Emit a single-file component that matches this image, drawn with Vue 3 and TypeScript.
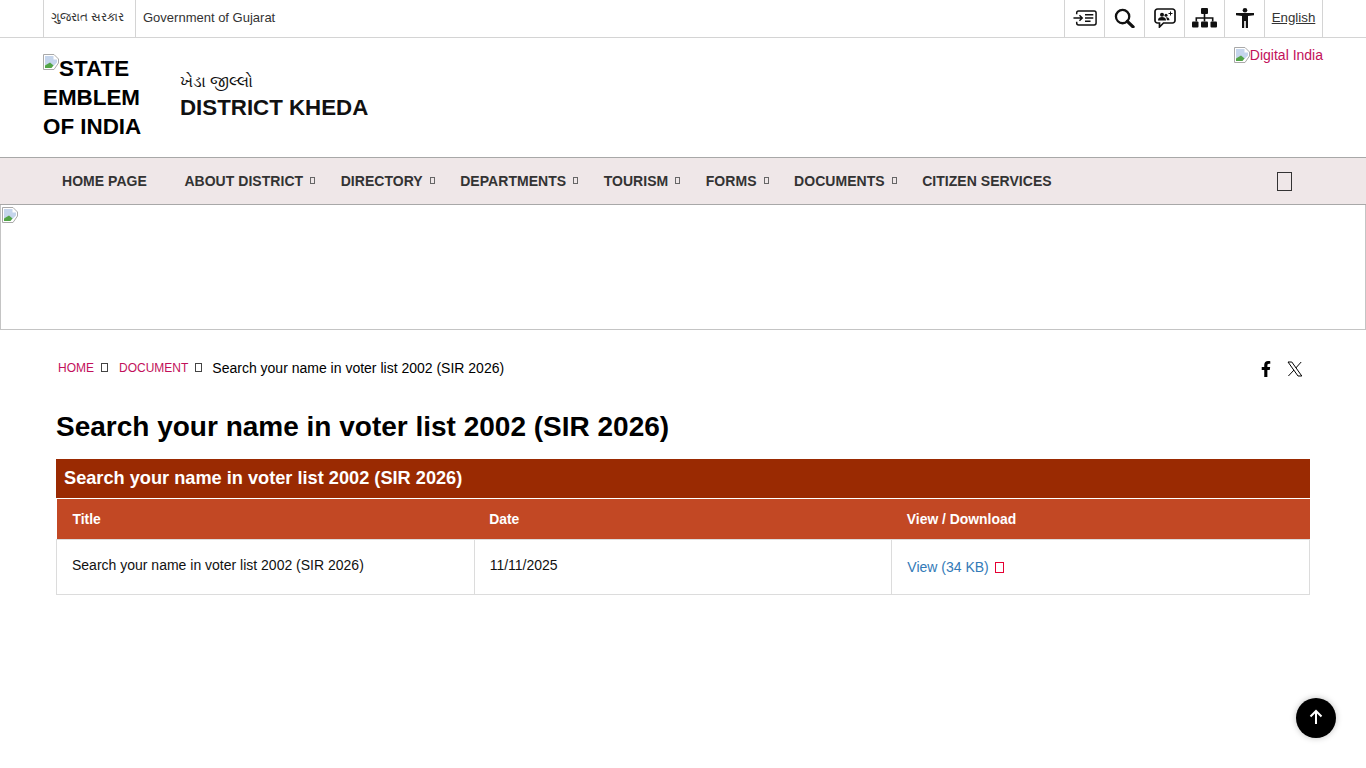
<script setup lang="ts">
interface NavItem {
  label: string;
  hasMenu: boolean;
}

const navItems: NavItem[] = [
  { label: 'HOME PAGE', hasMenu: false },
  { label: 'ABOUT DISTRICT', hasMenu: true },
  { label: 'DIRECTORY', hasMenu: true },
  { label: 'DEPARTMENTS', hasMenu: true },
  { label: 'TOURISM', hasMenu: true },
  { label: 'FORMS', hasMenu: true },
  { label: 'DOCUMENTS', hasMenu: true },
  { label: 'CITIZEN SERVICES', hasMenu: false },
]

const pageTitle = 'Search your name in voter list 2002 (SIR 2026)'
</script>

<template>
  <div class="page">
    <!-- Top bar -->
    <div class="top-bar">
      <div class="top-inner">
        <div class="gov-links">
          <a class="gov-link gu">ગુજરાત સરકાર</a>
          <a class="gov-link">Government of Gujarat</a>
        </div>
        <div class="tools">
          <a class="tool">
            <svg width="24" height="16" viewBox="0 0 26 17" fill="none" stroke="#111" stroke-width="1.6">
              <path d="M4 4.500V3A2 2 0 0 1 6 1h17a2 2 0 0 1 2 2v11a2 2 0 0 1-2 2H6a2 2 0 0 1-2-2V12.500" />
              <path d="M0.500 8.500h9M7 5.500l3 3-3 3" />
              <path d="M13 5h9M13 8.500h9M13 12h6" />
            </svg>
          </a>
          <a class="tool">
            <svg width="21" height="20" viewBox="0 0 22 21" fill="none" stroke="#111">
              <circle cx="9" cy="9" r="7" stroke-width="2.400" />
              <path d="M14 14l6 5.800" stroke-width="3.400" stroke-linecap="round" />
            </svg>
          </a>
          <a class="tool">
            <svg width="22" height="20" viewBox="0 0 22 20">
              <path d="M3.500 1h15A2.500 2.500 0 0 1 21 3.500v9a2.500 2.500 0 0 1-2.500 2.500H9.500L5.500 19v-4h-2A2.500 2.500 0 0 1 1 12.500v-9A2.500 2.500 0 0 1 3.500 1z" fill="none" stroke="#111" stroke-width="1.700" />
              <circle cx="8" cy="6.800" r="2" fill="#111" />
              <path d="M4 12.500c0-2.400 1.800-3.400 4-3.400s4 1 4 3.400z" fill="#111" />
              <circle cx="12" cy="7.200" r="1.500" fill="#111" />
              <path d="M12.500 9.200c1.800 0 3 .9 3 3h-2.600c0-1.200-.4-2-1.100-2.600z" fill="#111" />
              <path d="M16.500 3.500v4M14.500 5.500h4" stroke="#111" stroke-width="1" />
            </svg>
          </a>
          <a class="tool">
            <svg width="25" height="20" viewBox="0 0 25 20" fill="#111">
              <rect x="9" y="0" width="7" height="6" rx="1" />
              <rect x="0" y="13.500" width="6.500" height="6" rx="1" />
              <rect x="9" y="13.500" width="7" height="6" rx="1" />
              <rect x="18.500" y="13.500" width="6.500" height="6" rx="1" />
              <path d="M11.700 6h1.600v3.200h8.200v4.300h-1.600v-2.700h-6.600v2.700h-1.600v-2.700H5.100v2.700H3.500V9.200h8.200z" />
            </svg>
          </a>
          <a class="tool">
            <svg width="20" height="20" viewBox="0 0 20 20" fill="#111">
              <circle cx="10" cy="2.300" r="2.300" />
              <path d="M1 5h18v2.200l-6 .8v12h-2.200v-7h-1.600v7H7V8l-6-.8z" />
            </svg>
          </a>
          <a class="tool lang">English</a>
        </div>
      </div>
    </div>

    <!-- Header -->
    <header class="site-header">
      <div class="brand">
        <div class="emblem">
          <svg class="broken" width="16" height="16" viewBox="0 0 16 16">
            <path d="M0.500 0.500h10.500L15.500 5v4L11 15.500H0.500z" fill="#fff" stroke="#a9a9a9" />
            <path d="M2 2h8.500v3.500H14v3L10.500 12 2 11z" fill="#c5d5ec" />
            <path d="M2 14V11.500l5-3 3.500 3-2 2.500z" fill="#52a447" />
          </svg>STATE EMBLEM OF INDIA
        </div>
        <div class="brand-text">
          <div class="brand-gu">ખેડા જીલ્લો</div>
          <div class="brand-en">DISTRICT KHEDA</div>
        </div>
      </div>
      <a class="digital">
        <svg class="broken" width="16" height="16" viewBox="0 0 16 16">
          <path d="M0.500 0.500h10.500L15.500 5v4L11 15.500H0.500z" fill="#fff" stroke="#a9a9a9" />
          <path d="M2 2h8.500v3.500H14v3L10.500 12 2 11z" fill="#c5d5ec" />
          <path d="M2 14V11.500l5-3 3.500 3-2 2.500z" fill="#52a447" />
        </svg>Digital India
      </a>
    </header>

    <!-- Nav -->
    <nav class="main-nav">
      <ul class="nav-list">
        <li v-for="item in navItems" :key="item.label" class="nav-item" :class="{ 'has-menu': item.hasMenu }">
          <span>{{ item.label }}</span>
          <i v-if="item.hasMenu" class="caret"></i>
        </li>
      </ul>
      <i class="nav-search"></i>
    </nav>

    <!-- Banner -->
    <div class="banner">
      <svg class="broken" width="16" height="16" viewBox="0 0 16 16">
        <path d="M0.500 0.500h10.500L15.500 5v4L11 15.500H0.500z" fill="#fff" stroke="#a9a9a9" />
        <path d="M2 2h8.500v3.500H14v3L10.500 12 2 11z" fill="#c5d5ec" />
        <path d="M2 14V11.500l5-3 3.500 3-2 2.500z" fill="#52a447" />
      </svg>
    </div>

    <!-- Content -->
    <main class="content">
      <div class="crumb-row">
        <div class="crumbs">
          <a>HOME</a>
          <i class="crumb-sep"></i>
          <a>DOCUMENT</a>
          <i class="crumb-sep last"></i>
          <span>{{ pageTitle }}</span>
        </div>
        <div class="share">
          <svg width="10" height="16" viewBox="0 0 320 512" fill="#000">
            <path d="M279 288l14-93h-89v-60c0-25 12-50 52-50h41V6S260 0 225 0c-73 0-121 44-121 125v70H23v93h81v224h100V288z" />
          </svg>
          <svg width="16" height="16" viewBox="0 0 16 16" fill="none" stroke="#000" stroke-width="1">
            <path d="M1 1h3.800l10 14h-3.800zM14.200 1L8.800 7M7 9l-5.600 6" />
          </svg>
        </div>
      </div>

      <h1 class="page-title">{{ pageTitle }}</h1>

      <h2 class="panel-title">{{ pageTitle }}</h2>
      <table class="doc-table">
        <thead>
          <tr>
            <th>Title</th>
            <th>Date</th>
            <th>View / Download</th>
          </tr>
        </thead>
        <tbody>
          <tr>
            <td>{{ pageTitle }}</td>
            <td>11/11/2025</td>
            <td class="view-cell"><a>View (34 KB)</a><i class="pdf-icon"></i></td>
          </tr>
        </tbody>
      </table>
    </main>

    <button class="to-top" aria-label="Back to top">
      <svg width="16" height="16" viewBox="0 0 16 16" fill="none" stroke="#fff" stroke-width="2">
        <path d="M8 15V2M2.500 7.500L8 2l5.500 5.500" />
      </svg>
    </button>
  </div>
</template>

<style>
html, body { background: #fff; }
</style>

<style scoped>
.page {
  position: relative;
  height: 768px;
  overflow: hidden;
  font-family: "Liberation Sans", Arial, "Noto Sans", sans-serif;
  color: #000;
  background: #fff;
}
a { text-decoration: none; }
.broken { flex: none; vertical-align: top; }

/* Top bar */
.top-bar { height: 37px; border-bottom: 1px solid #d4d4d4; }
.top-inner {
  height: 100%;
  margin: 0 43px;
  display: flex;
  justify-content: space-between;
}
.gov-links { display: flex; }
.gov-link {
  display: flex;
  align-items: center;
  padding: 0 7px 3px;
  font-size: 13px;
  color: #333;
  border-left: 1px solid #d4d4d4;
}
.gu { width: 92px; box-sizing: border-box; font-size: 12.3px; white-space: nowrap; }
.tools { display: flex; border-right: 1px solid #d4d4d4; }
.tool {
  width: 40px;
  box-sizing: border-box;
  padding-bottom: 1px;
  display: flex;
  align-items: center;
  justify-content: center;
  border-left: 1px solid #d4d4d4;
}
.lang {
  width: 58px;
  padding-bottom: 3px;
  font-size: 13.3px;
  color: #333;
  text-decoration: underline;
}

/* Header */
.site-header {
  height: 119px;
  padding: 0 43px;
  display: flex;
  justify-content: space-between;
  align-items: flex-start;
}
.brand { display: flex; align-items: center; padding-top: 16px; }
.emblem {
  width: 100px;
  margin-right: 37px;
  font-size: 22.4px;
  line-height: 29px;
  font-weight: 700;
  color: #000;
}
.brand-text { margin-top: -6px; }
.brand-gu { font-size: 16.2px; line-height: 26px; color: #111; }
.brand-en { font-size: 22.3px; line-height: 28px; font-weight: 700; color: #111; }
.digital {
  display: flex;
  margin-top: 9px;
  font-size: 14px;
  line-height: 16px;
  color: #c2105a;
}

/* Nav */
.main-nav {
  height: 46px;
  display: flex;
  align-items: center;
  justify-content: space-between;
  padding: 0 74px 0 62px;
  background: #efe7e8;
  border-top: 1px solid #a8a8a8;
  border-bottom: 1px solid #a8a8a8;
}
.nav-list { display: flex; margin: 0; padding: 0; list-style: none; }
.nav-item {
  display: flex;
  align-items: center;
  margin-right: 37.5px;
  font-size: 14px;
  font-weight: 700;
  letter-spacing: 0.04px;
  color: #333;
  white-space: nowrap;
}
.nav-item.has-menu { margin-right: 25.5px; }
.caret {
  width: 5px;
  height: 7px;
  box-sizing: border-box;
  margin: -1px 0 0 7px;
  border: 1px solid #666;
}
.nav-search {
  width: 13px;
  height: 17px;
  border: 1px solid #333;
}

/* Banner */
.banner {
  height: 125px;
  box-sizing: border-box;
  padding: 2px 0 0 1px;
  border: 1px solid #c4c4c4;
  border-top: 0;
}

/* Content */
.content { padding: 0 56px; }
.crumb-row {
  display: flex;
  justify-content: space-between;
  align-items: center;
  height: 24px;
  margin-top: 26px;
  padding: 0 2px;
}
.crumbs {
  display: flex;
  align-items: center;
  font-size: 14px;
  color: #000;
}
.crumbs a { font-size: 12px; color: #c2105a; }
.crumb-sep {
  width: 7px;
  height: 9px;
  box-sizing: border-box;
  margin: -2px 11px 0 7px;
  border: 1px solid #444;
}
.crumb-sep.last { margin-right: 10px; }
.share {
  display: flex;
  align-items: center;
  gap: 16px;
  margin: 2px 5px 0 0;
}
.page-title {
  margin: 30px 0 15px;
  font-size: 28px;
  line-height: 34px;
  font-weight: 700;
  color: #000;
}
.panel-title {
  margin: 0;
  padding: 0 8px;
  height: 40px;
  line-height: 38px;
  font-size: 18.2px;
  font-weight: 700;
  color: #fff;
  background: #9a2a02;
  border-bottom: 1px solid #fff;
  box-sizing: border-box;
}
.doc-table {
  width: 100%;
  border-collapse: collapse;
  table-layout: fixed;
  font-size: 14px;
}
.doc-table th {
  height: 40px;
  padding: 0 16px;
  text-align: left;
  font-size: 13.9px;
  font-weight: 700;
  color: #fff;
  background: #c24824;
}
.doc-table th + th { padding-left: 15px; }
.doc-table td {
  height: 55px;
  box-sizing: border-box;
  padding: 0 15px 4px;
  border: 1px solid #dcdcdc;
  color: #111;
}
.doc-table .view-cell { padding-bottom: 0; }
.view-cell a { color: #337ab7; }
.pdf-icon {
  display: inline-block;
  width: 9px;
  height: 11px;
  box-sizing: border-box;
  margin-left: 6px;
  vertical-align: -1px;
  border: 1px solid #e60033;
}

/* Back to top */
.to-top {
  position: absolute;
  right: 30px;
  bottom: 30px;
  width: 40px;
  height: 40px;
  padding: 0 0 3px;
  display: flex;
  align-items: center;
  justify-content: center;
  border: 0;
  border-radius: 50%;
  background: #000;
  box-shadow: 0 0 6px rgba(0, 0, 0, 0.25);
}
</style>
